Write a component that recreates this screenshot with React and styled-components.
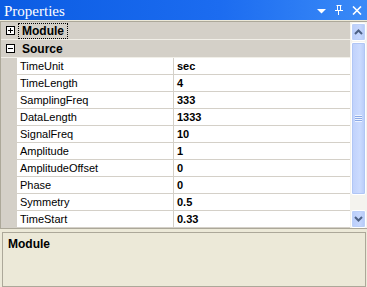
import React from "react";
import styled, { createGlobalStyle } from "styled-components";

const rows = [
    ["TimeUnit", "sec"],
    ["TimeLength", "4"],
    ["SamplingFreq", "333"],
    ["DataLength", "1333"],
    ["SignalFreq", "10"],
    ["Amplitude", "1"],
    ["AmplitudeOffset", "0"],
    ["Phase", "0"],
    ["Symmetry", "0.5"],
    ["TimeStart", "0.33"],
];

const ExpandBox = ({ open }) => (
    <svg width="9" height="9" viewBox="0 0 9 9">
        <rect x="0.5" y="0.5" width="8" height="8" fill="#fff" stroke="#000" />
        <path d="M2 4.5h5" stroke="#000" />
        {!open && <path d="M4.5 2v5" stroke="#000" />}
    </svg>
);

const App = () => {
    return (
        <>
            <GlobalStyle />
            <Window>
                <TitleBar>
                    <Title>Properties</Title>
                    <TitleIcons>
                        <svg width="9" height="5" viewBox="0 0 9 5">
                            <path d="M0 0h9L4.5 4.5z" fill="#fff" />
                        </svg>
                        <svg width="8" height="10" viewBox="0 0 8 10">
                            <path d="M1.5 0.5h5M2.5 0.5v5M5.5 0.5v5M0 5.5h8M3.5 6v4" stroke="#fff" fill="none" />
                        </svg>
                        <svg width="10" height="9" viewBox="0 0 10 9">
                            <path d="M1 0.5l8 8M9 0.5l-8 8" stroke="#fff" strokeWidth="1.6" />
                        </svg>
                    </TitleIcons>
                </TitleBar>
                <Grid>
                    <Table>
                        <Category>
                            <BoxCell>
                                <ExpandBox open={false} />
                            </BoxCell>
                            <CatLabel focused>Module</CatLabel>
                        </Category>
                        <Category>
                            <BoxCell>
                                <ExpandBox open={true} />
                            </BoxCell>
                            <CatLabel>Source</CatLabel>
                        </Category>
                        {rows.map(([name, value]) => (
                            <Row key={name}>
                                <Gutter />
                                <NameCell>{name}</NameCell>
                                <ValueCell>{value}</ValueCell>
                            </Row>
                        ))}
                    </Table>
                    <ScrollBar>
                        <ScrollButton>
                            <svg width="9" height="6" viewBox="0 0 9 6">
                                <path d="M1 5l3.5-3.5L8 5" stroke="#4d6185" strokeWidth="2" fill="none" />
                            </svg>
                        </ScrollButton>
                        <Thumb>
                            <Grip />
                        </Thumb>
                        <Track />
                        <ScrollButton>
                            <svg width="9" height="6" viewBox="0 0 9 6">
                                <path d="M1 1l3.5 3.5L8 1" stroke="#4d6185" strokeWidth="2" fill="none" />
                            </svg>
                        </ScrollButton>
                    </ScrollBar>
                </Grid>
                <Description>
                    <DescTitle>Module</DescTitle>
                </Description>
            </Window>
        </>
    );
};

export default App;

const GlobalStyle = createGlobalStyle`
    body {
        margin: 0;
        background: #ece9d8;
    }
`;

const Window = styled.div`
    width: 367px;
    height: 287px;
    background: #ece9d8;
    display: flex;
    flex-direction: column;
    font-family: "Liberation Sans", Arial, sans-serif;
    font-size: 11px;
    overflow: hidden;
`;

const TitleBar = styled.div`
    height: 20px;
    display: flex;
    align-items: center;
    justify-content: space-between;
    padding: 0 5px 0 4px;
    background: linear-gradient(90deg, #0b5ce3 0%, #1c6cf0 60%, #3a8af7 100%);
    margin-bottom: 1px;
`;

const Title = styled.span`
    color: #fff;
    font-family: "Liberation Serif", "DejaVu Serif", serif;
    font-size: 15px;
    line-height: 20px;
    padding-top: 1px;
`;

const TitleIcons = styled.div`
    display: flex;
    align-items: center;
    gap: 9px;
    svg:first-child {
        margin-top: 3px;
    }
`;

const Grid = styled.div`
    display: flex;
    border: 1px solid #aca899;
    border-right: none;
    height: 206px;
    margin-bottom: 3px;
`;

const Table = styled.div`
    flex: 1;
    display: flex;
    flex-direction: column;
    background: #fff;
`;

const Category = styled.div`
    height: 17px;
    display: flex;
    align-items: center;
    background: #d4d0c8;
    border-bottom: 1px solid #f1efe8;
`;

const BoxCell = styled.div`
    width: 16px;
    display: flex;
    justify-content: center;
    padding-left: 1px;
`;

const CatLabel = styled.span`
    font-weight: bold;
    font-size: 12px;
    color: #000;
    padding: 0 3px 0 3px;
    margin-left: 1px;
    line-height: 14px;
    outline: ${(p) => (p.focused ? "1px dotted #000" : "none")};
`;

const Row = styled.div`
    height: 17px;
    display: flex;
`;

const Gutter = styled.div`
    width: 16px;
    background: #d4d0c8;
`;

const NameCell = styled.div`
    width: 157px;
    padding-left: 3px;
    box-sizing: border-box;
    border-right: 1px solid #d4d0c8;
    border-bottom: 1px solid #d4d0c8;
    line-height: 16px;
    color: #000;
`;

const ValueCell = styled.div`
    flex: 1;
    padding-left: 3px;
    border-bottom: 1px solid #d4d0c8;
    line-height: 16px;
    font-weight: bold;
    color: #000;
`;

const ScrollBar = styled.div`
    width: 17px;
    display: flex;
    flex-direction: column;
    background: #f4f3ee;
    padding-top: 1px;
    box-sizing: border-box;
`;

const ScrollButton = styled.div`
    height: 16px;
    margin: 0 1px;
    display: flex;
    align-items: center;
    justify-content: center;
    border: 1px solid #fff;
    border-radius: 2px;
    background: linear-gradient(90deg, #b9cdfa, #c6d7fd 60%, #b4c8f6);
    box-shadow: inset 0 0 0 1px #bcd0f9;
`;

const Thumb = styled.div`
    height: 151px;
    margin: 1px 1px 0;
    border: 1px solid #fff;
    border-radius: 2px;
    background: linear-gradient(90deg, #bfd1fb, #cbdbfe 60%, #b7cbf8);
    box-shadow: inset 0 0 0 1px #b0c6f5;
    display: flex;
    align-items: center;
    justify-content: center;
`;

const Grip = styled.div`
    width: 7px;
    height: 7px;
    background: repeating-linear-gradient(180deg, #eef3fe 0 1px, #8caae6 1px 2px);
`;

const Track = styled.div`
    flex: 1;
`;

const Description = styled.div`
    margin: 0 1px 0 2px;
    height: 51px;
    border: 1px solid #aca899;
    padding: 4px 5px;
`;

const DescTitle = styled.div`
    font-weight: bold;
    font-size: 12px;
    color: #000;
`;
